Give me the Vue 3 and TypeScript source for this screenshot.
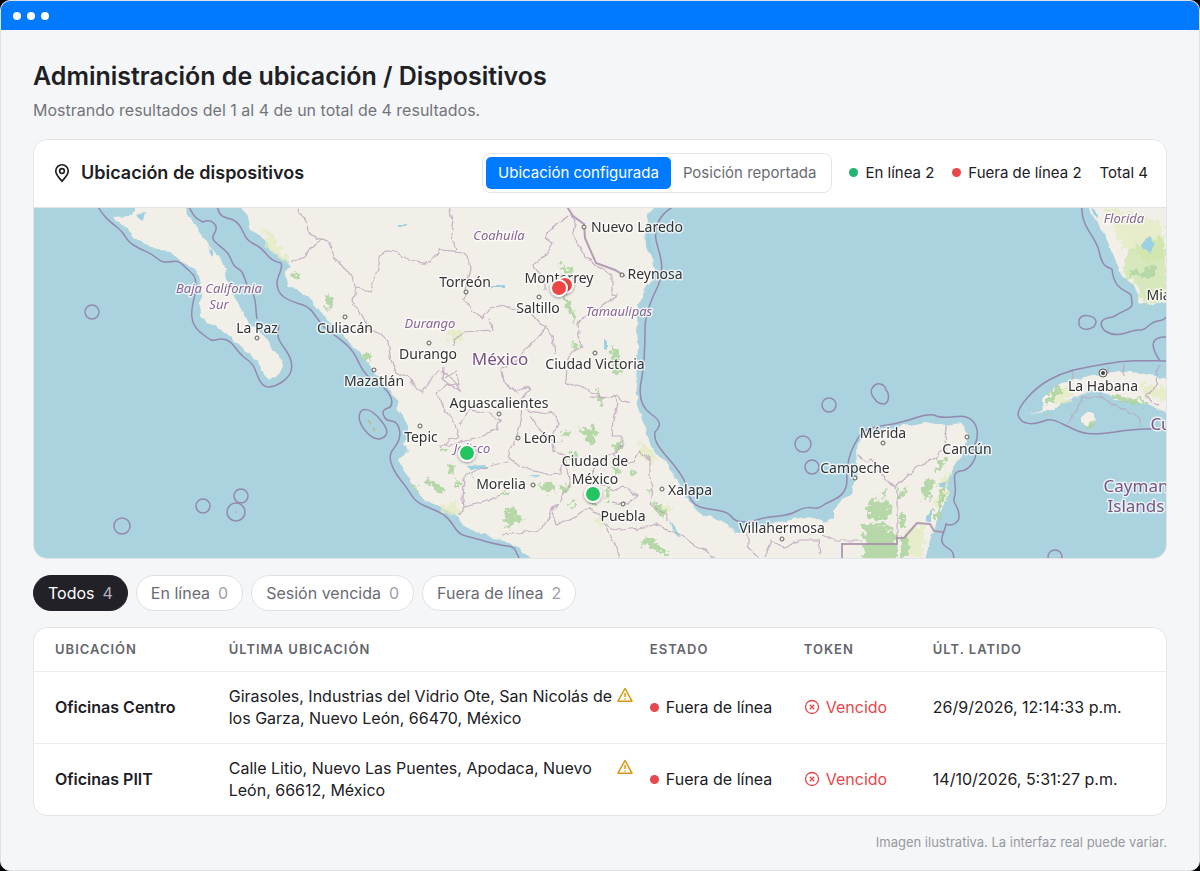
<script setup lang="ts">
import { ref } from 'vue'

type Mode = 'configured' | 'reported'
interface Place { text: string; x: number; y: number; kind: string; dot?: [number, number] }
interface Marker { x: number; y: number; color: string }
interface Device { name: string; address: string; state: string; token: string; beat: string }

const mode = ref<Mode>('configured')
const modes: { id: Mode; label: string }[] = [
  { id: 'configured', label: 'Ubicación configurada' },
  { id: 'reported', label: 'Posición reportada' },
]

const active = ref('Todos')
const filters = [
  { label: 'Todos', count: 4 },
  { label: 'En línea', count: 0 },
  { label: 'Sesión vencida', count: 0 },
  { label: 'Fuera de línea', count: 2 },
]

const columns = ['Ubicación', 'Última ubicación', 'Estado', 'Token', 'Últ. latido']
const devices: Device[] = [
  {
    name: 'Oficinas Centro',
    address: 'Girasoles, Industrias del Vidrio Ote, San Nicolás de los Garza, Nuevo León, 66470, México',
    state: 'Fuera de línea', token: 'Vencido', beat: '26/9/2026, 12:14:33 p.m.',
  },
  {
    name: 'Oficinas PIIT',
    address: 'Calle Litio, Nuevo Las Puentes, Apodaca, Nuevo León, 66612, México',
    state: 'Fuera de línea', token: 'Vencido', beat: '14/10/2026, 5:31:27 p.m.',
  },
]

const places: Place[] = [
  { text: 'Coahuila', x: 499, y: 240, kind: 'region' },
  { text: 'Durango', x: 430, y: 328, kind: 'region' },
  { text: 'Tamaulipas', x: 619, y: 316, kind: 'region' },
  { text: 'Jalisco', x: 472, y: 453, kind: 'region' },
  { text: 'Baja California', x: 219, y: 293, kind: 'region' },
  { text: 'Sur', x: 219, y: 309, kind: 'region' },
  { text: 'Florida', x: 1124, y: 223, kind: 'region' },
  { text: 'México', x: 500, y: 365, kind: 'country' },
  { text: 'Cuba', x: 1171, y: 430, kind: 'country' },
  { text: 'Cayman', x: 1136, y: 492, kind: 'country' },
  { text: 'Islands', x: 1136, y: 512, kind: 'country' },
  { text: 'Nuevo Laredo', x: 637, y: 232, kind: 'city', dot: [584, 227] },
  { text: 'Reynosa', x: 655, y: 279, kind: 'city', dot: [622, 275] },
  { text: 'Torreón', x: 465, y: 287, kind: 'city', dot: [466, 292] },
  { text: 'Monterrey', x: 559, y: 283, kind: 'city' },
  { text: 'Saltillo', x: 538, y: 313, kind: 'city', dot: [539, 297] },
  { text: 'La Paz', x: 257, y: 333, kind: 'city', dot: [257, 338] },
  { text: 'Culiacán', x: 345, y: 333, kind: 'city', dot: [345, 317] },
  { text: 'Durango', x: 428, y: 359, kind: 'city', dot: [429, 343] },
  { text: 'Mazatlán', x: 374, y: 386, kind: 'city', dot: [374, 370] },
  { text: 'Ciudad Victoria', x: 595, y: 369, kind: 'city', dot: [595, 353] },
  { text: 'Aguascalientes', x: 499, y: 408, kind: 'city', dot: [499, 414] },
  { text: 'Tepic', x: 421, y: 442, kind: 'city', dot: [420, 426] },
  { text: 'León', x: 540, y: 443, kind: 'city', dot: [518, 438] },
  { text: 'Morelia', x: 501, y: 489, kind: 'city', dot: [533, 485] },
  { text: 'Ciudad de', x: 595, y: 466, kind: 'city' },
  { text: 'México', x: 595, y: 484, kind: 'city' },
  { text: 'Puebla', x: 623, y: 521, kind: 'city', dot: [623, 504] },
  { text: 'Xalapa', x: 690, y: 495, kind: 'city', dot: [662, 489] },
  { text: 'Villahermosa', x: 782, y: 533, kind: 'city', dot: [782, 539] },
  { text: 'Mérida', x: 883, y: 438, kind: 'city', dot: [883, 443] },
  { text: 'Campeche', x: 855, y: 473, kind: 'city', dot: [855, 478] },
  { text: 'Cancún', x: 967, y: 454, kind: 'city', dot: [967, 437] },
  { text: 'La Habana', x: 1103, y: 391, kind: 'city' },
  { text: 'Miami', x: 1167, y: 300, kind: 'city' },
]

const markers: Marker[] = [
  { x: 565, y: 285, color: '#ef4444' },
  { x: 559, y: 288, color: '#ef4444' },
  { x: 467, y: 453, color: '#22c55e' },
  { x: 593, y: 494, color: '#22c55e' },
]
</script>

<template>
  <div class="window">
    <div class="titlebar"><i></i><i></i><i></i></div>
    <main class="page">
      <h1>Administración de ubicación / Dispositivos</h1>
      <p class="summary">Mostrando resultados del 1 al 4 de un total de 4 resultados.</p>

      <section class="card">
        <header class="card-head">
          <svg class="pin" viewBox="0 0 24 24" aria-hidden="true">
            <path d="M12 22C9.500 18.600 4.500 14.400 4.500 9.600a7.500 7.500 0 0 1 15 0C19.500 14.400 14.500 18.600 12 22Z" />
            <circle cx="12" cy="9.600" r="2.800" />
          </svg>
          <h2>Ubicación de dispositivos</h2>
          <div class="switch" role="group" aria-label="Tipo de ubicación">
            <button
              v-for="m in modes" :key="m.id" type="button"
              :class="{ on: mode === m.id }" :aria-pressed="mode === m.id" @click="mode = m.id"
            >{{ m.label }}</button>
          </div>
          <div class="legend">
            <span><i class="dot green-dot"></i>En línea 2</span>
            <span><i class="dot red-dot"></i>Fuera de línea 2</span>
            <span>Total 4</span>
          </div>
        </header>

        <svg class="map" viewBox="34 208 1132 350" preserveAspectRatio="xMidYMid slice" role="img" aria-label="Mapa de dispositivos">
          <defs>
            <filter id="rough" x="-5%" y="-5%" width="110%" height="110%">
              <feTurbulence type="fractalNoise" baseFrequency="0.11" numOctaves="2" seed="4" />
              <feDisplacementMap in="SourceGraphic" scale="6" xChannelSelector="R" yChannelSelector="G" />
              <feGaussianBlur stdDeviation="0.3" />
            </filter>
            <filter id="patchy" x="-5%" y="-5%" width="110%" height="110%">
              <feTurbulence type="fractalNoise" baseFrequency="0.2" numOctaves="2" seed="9" />
              <feDisplacementMap in="SourceGraphic" scale="14" xChannelSelector="R" yChannelSelector="G" />
              <feGaussianBlur stdDeviation="0.5" />
            </filter>
            <filter id="shade" x="-50%" y="-50%" width="200%" height="200%">
              <feDropShadow dx="0" dy="1" stdDeviation="1.500" flood-opacity="0.4" />
            </filter>
          </defs>
          <rect class="sea" x="34" y="208" width="1132" height="350" />

          <g class="land" filter="url(#rough)">
            <path d="M113 217L130 216L140 200L180 200L193 222L200 232L207 243L215 252L222 262L226 275L229 285L236 300L243 312L248 322L258 330L268 340L272 350L281 358L283 366L279 374L268 380L262 370L256 360L243 348L232 338L222 330L208 322L199 315L201 303L201 285L199 275L193 268L182 262L170 252L158 251L145 244L133 238L127 228Z" />
            <path d="M235 200L248 217L250 228L265 240L272 252L284 258L290 266L285 273L287 285L300 292L312 300L320 312L332 324L340 332L347 340L355 348L365 358L372 370L380 378L390 390L397 400L398 412L408 425L408 435L403 443L408 452L398 460L404 470L410 478L415 488L425 500L440 507L455 514L460 522L470 530L490 537L505 541L520 548L536 565L924 565L930 540L936 525L938 515L943 505L949 493L945 482L953 468L962 455L966 442L968 434L962 423L943 425L925 422L905 426L880 430L862 437L857 450L858 465L855 482L851 493L842 500L833 510L833 518L826 522L808 517L790 519L770 525L750 528L737 533L728 525L715 518L697 512L686 497L675 478L668 465L655 452L648 438L645 425L638 405L636 385L637 360L638 345L637 325L638 305L642 293L652 282L655 268L649 252L644 240L647 225L648 214L662 200Z" />
            <path d="M1085 200L1095 220L1105 235L1112 252L1117 265L1123 277L1134 285L1140 303L1150 305L1172 300L1172 200Z" />
            <path d="M1025 414L1043 410L1042 400L1050 390L1062 383L1080 379L1100 374L1120 371L1140 373L1172 380L1172 414L1155 408L1140 402L1115 400L1110 395L1090 390L1078 397L1063 402L1053 411L1045 411Z" />
            <path d="M1081 415L1088 412L1094 415L1095 424L1087 427L1081 422Z" />
          </g>

          <g class="pale" filter="url(#patchy)">
            <path d="M262 226L272 232L280 250L290 258L284 262L268 248Z M448 330L464 330L464 340L450 342Z M440 505L458 502L460 516L446 514Z M638 440L645 442L652 452L656 462L648 464L640 452Z M1140 385L1166 388L1166 400L1145 396Z M1050 392L1070 388L1075 396L1055 405Z" />
            <path d="M1112 214L1130 212L1164 225L1164 260L1148 262L1128 250L1118 238Z M1102 208L1120 208L1118 214L1106 214Z M596 518L602 514L602 526L596 524Z M662 505L672 505L674 513L662 515Z M942 478L950 470L946 500L940 508L934 505Z M908 528L925 524L922 556L906 556Z" />
          </g>
          <g class="green" filter="url(#patchy)">
            <path d="M291 274L302 271L302 276L292 278Z M326 292L332 298L331 306L326 303Z M326 308L331 310L330 313L326 311Z M364 353L371 353L372 361L364 359Z M560 264L570 268L574 274L562 272Z M563 294L570 303L577 318L576 325L568 310L561 298Z M574 342L578 346L576 350L573 348Z M612 346L618 351L624 370L614 374L611 364Z M596 384L599 388L602 404L598 402Z" />
            <path d="M441 448L449 448L448 454L442 453Z M448 464L454 466L454 474L449 473Z M424 480L434 482L446 488L444 492L434 490Z M456 480L460 482L459 488L455 486Z M412 485L420 486L416 489Z M506 510L514 507L517 515L526 519L514 523L510 530L504 521Z M537 486L550 482L556 490L547 494L542 490Z M560 488L568 485L570 492L564 493Z M500 493L508 490L508 495L502 497Z M471 477L475 476L474 480Z" />
            <path d="M577 427L588 431L594 423L597 438L592 446L586 438Z M561 433L568 431L570 435L563 438Z M614 446L622 439L620 450L612 449Z M570 453L577 453L575 462L569 461Z M567 502L576 499L576 504L566 507Z M605 490L610 489L609 500L606 500Z M590 501L596 501L596 506L590 506Z M614 468L620 467L618 474L613 472Z M653 502L660 505L666 513L660 518L653 510Z M645 537L652 536L660 546L669 552L666 557L652 548L641 544Z M646 488L650 490L649 494Z M630 470L636 472L634 478Z" />
            <path d="M882 492L888 490L886 496L880 498Z M871 500L889 501L891 512L886 520L870 520L866 509Z M862 524L884 523L896 535L897 562L862 562L866 540Z M900 488L907 489L906 496L899 498Z M900 513L905 512L905 524L900 528Z M901 536L907 536L907 558L901 558Z M926 480L933 478L929 500L923 500L922 490Z M942 458L947 456L943 468L936 474L935 468Z M934 512L939 502L941 484L946 490L939 520L934 522Z" />
            <path d="M1046 396L1058 387L1064 389L1052 402L1046 402Z M1112 396L1128 396L1145 402L1142 406L1118 401Z M1040 414L1050 411L1045 415Z M1084 425L1095 422L1094 428Z" />
            <path class="soft" d="M1126 250L1140 246L1164 235L1166 270L1166 298L1150 303L1140 298L1136 284L1124 274Z" />
            <path d="M1128 270L1138 272L1148 268L1156 266L1158 274L1148 278L1138 276L1130 276Z" />
          </g>
          <g class="lakes" filter="url(#rough)">
            <path d="M466 465L485 464L487 468L470 469Z M490 286h14v2h-14Z M398 225h8v2h-8Z M604 340L607 340L607 350L604 349Z M1142 245L1150 236L1155 243L1151 253L1143 249Z M670 520L676 528L681 538L674 532Z M530 476L540 476L538 478Z M926 515L932 510L932 524L926 522Z M941 482L947 482L946 488L940 488Z M136 215L145 213L143 220Z M209 247L214 252L214 258L210 254Z M646 228L650 238L656 262L652 254L646 240Z M1092 208L1099 214L1096 218Z" />
          </g>

          <g class="states" filter="url(#rough)">
            <path d="M291 262L304 256L316 243L322 240L330 243L333 258L347 270L349 273L356 288L371 291L375 277L379 260L385 249L397 253L410 260L430 263L440 250L463 252L468 257L470 269L463 299L472 312L482 318L490 308L500 306L515 309L530 312L540 324L547 327L553 336L555 354" />
            <path d="M322 240L308 233L306 219L300 215L296 205 M450 205L453 220L451 236L456 249 M356 288L352 301L362 315L368 328L381 334L388 341L390 356L396 372L408 378L414 384L422 394L430 380L440 370L452 378L460 390L446 384L438 392L441 406L449 414L456 426L460 438L448 440L441 449" />
            <path d="M490 318L492 330L463 332L453 340L454 346 M444 366L443 380L452 386L458 384L456 372L443 380 M545 327L540 335L527 347L520 356L510 364L501 370L503 382L514 392L525 386L530 390L520 400L528 410L555 414L558 424L552 436 M501 370L505 384L518 394" />
            <path d="M567 216L560 222L551 228L545 238L552 243L546 254L533 265L540 275L545 284L545 290 M569 215L576 220L573 233L579 245L585 256L597 266L612 276L612 294L617 295L600 308L585 316L578 324L580 342L583 348L571 352L567 364L566 383L580 387L600 396L618 397L630 404" />
            <path d="M523 411L519 430L513 445L508 457L519 466L530 470L550 475L560 474L566 456L554 450L553 443L562 440 M508 462L480 468L464 477L463 500L464 507L478 504L490 500L500 495 M464 507L458 516 M440 446L460 442L480 438L496 430L500 420L488 413L470 410L460 425" />
            <path d="M553 440L540 430L530 415 M566 456L570 480L560 502L550 512L548 520L540 530L503 535 M552 512L556 525L570 520L590 508L601 516L604 525L620 530L640 528L655 525L665 528L680 534L694 545L705 550L715 558" />
            <path d="M590 397L614 397L618 403L614 420L612 436L622 436L623 444L615 453L600 458L592 475L600 484L615 490L625 486L638 495L628 505L612 502 M614 453L620 464L634 462L640 450L650 462L650 475L652 490L650 503L658 510L668 515L668 522 M604 525L614 541L620 558 M748 532L748 546L758 558 M765 558L772 540L784 548L800 540L818 540L820 555 M822 535L836 541L862 541" />
            <path d="M858 455L867 462L872 459L882 474L895 488L900 482L918 467L938 456L945 448L946 425 M895 488L897 497L897 540 M1072 370L1074 380 M1108 365L1108 374 M1124 364L1124 376 M1083 397L1068 424 M1083 397L1100 397L1141 418L1141 428 M1160 364L1155 377L1158 384L1146 397L1158 406 M1100 397L1102 386" />
          </g>
          <g class="national">
            <path d="M566 205L573 216L584 224L585 238L596 263L615 270L625 276" />
            <path d="M842 562V544H897V538H904L917 523L930 524L934 531L943 532" />
          </g>

          <g class="limits">
            <path d="M97 205C103 216 108 220 118 228S123 239 135 246S149 251 158 259S174 256 183 265S196 274 196 286S184 319 200 332S211 339 222 339S236 352 245 358S254 367 258 377S268 391 282 382S293 360 285 349S277 337 279 325" />
            <path d="M188 205C193 214 194 218 203 222C212 218 220 226 214 234S226 247 230 257S235 267 240 270S245 286 251 292S255 308 257 319" />
            <path d="M217 205C219 216 222 217 231 219C246 225 240 238 254 244S265 260 281 263C284 269 277 275 277 283C277 298 291 301 303 305S316 322 330 332S352 347 359 363S375 380 384 388S394 406 388 408S382 413 385 418S396 418 399 428S397 444 392 451S393 471 403 483S411 500 425 506S446 514 453 525S462 535 477 539S498 545 508 546S514 553 522 562" />
            <path d="M676 205C659 214 654 226 656 240C659 254 666 265 658 286C652 298 645 313 645 328S645 359 642 377C637 398 642 408 651 414C663 422 660 427 655 432C653 441 661 450 668 458S683 475 686 485S690 503 700 507C714 511 724 509 731 516C735 522 740 522 752 522C769 513 781 520 797 511S813 514 825 504C841 497 847 493 847 479C846 457 855 443 860 435C870 424 887 427 905 421C916 419 923 413 934 415C945 421 957 414 966 417C979 421 980 437 973 448C981 456 969 471 960 471C950 473 957 483 955 495C951 505 959 504 959 515C960 522 952 527 946 524C944 535 938 540 945 546C952 551 954 551 954 562" />
            <path d="M1082 205C1080 227 1096 236 1099 251S1106 267 1112 269C1114 291 1126 289 1131 295C1134 312 1132 305 1113 317C1094 319 1103 329 1105 331C1120 340 1130 329 1139 330S1148 322 1158 321S1165 315 1172 312" />
            <path d="M1018 415C1018 406 1033 389 1049 380S1076 369 1105 364S1149 361 1172 361M1172 427C1150 430 1134 428 1115 432C1084 437 1078 431 1067 426S1052 418 1044 421S1022 427 1018 415" />
            <path d="M1172 337C1146 335 1152 349 1160 361M360 413C356 424 371 440 380 439C391 435 388 428 377 416C369 408 362 408 360 413" />
            <circle cx="92" cy="312" r="7" /><circle cx="203" cy="506" r="7" /><circle cx="241" cy="496" r="7" /><circle cx="236" cy="512" r="9" />
            <circle cx="122" cy="526" r="8" /><circle cx="829" cy="405" r="7" /><circle cx="803" cy="444" r="8" /><circle cx="812" cy="467" r="7" />
            <path d="M873 387C876 382 885 383 886 390C890 394 889 403 884 404C878 404 876 401 874 398C871 395 870 390 873 387M1079 320C1081 314 1093 314 1096 321C1096 330 1082 332 1079 325Z" />
            <circle cx="1055" cy="557" r="7" />
            <path class="islet" d="M368 420l3 4M373 428l2 3M236 511v2" />
          </g>

          <g v-for="p in places" :key="p.text + p.kind">
            <circle v-if="p.dot" class="town" :cx="p.dot[0]" :cy="p.dot[1]" r="2" />
            <text :class="p.kind" :x="p.x" :y="p.y">{{ p.text }}</text>
          </g>
          <circle class="town" cx="1103" cy="373" r="4" />
          <circle class="core" cx="1103" cy="373" r="2" />

          <circle v-for="m in markers" :key="m.x" class="marker" :cx="m.x" :cy="m.y" r="8" :fill="m.color" filter="url(#shade)" />
        </svg>
      </section>

      <div class="filters">
        <button
          v-for="f in filters" :key="f.label" type="button"
          :class="{ on: active === f.label }" @click="active = f.label"
        >{{ f.label }}<span>{{ f.count }}</span></button>
      </div>

      <div class="table-box">
        <table>
          <colgroup><col class="c1" /><col class="c2" /><col class="c3" /><col class="c4" /><col /></colgroup>
          <thead>
            <tr><th v-for="c in columns" :key="c" scope="col">{{ c }}</th></tr>
          </thead>
          <tbody>
            <tr v-for="d in devices" :key="d.name">
              <td class="name">{{ d.name }}</td>
              <td>
                <div class="address">
                  <span>{{ d.address }}</span>
                  <svg class="warn" viewBox="0 0 16 16" aria-hidden="true">
                    <path d="M8 1.500L15 14.200H1Z" /><path d="M8 6v4M8 11.200v1.400" />
                  </svg>
                </div>
              </td>
              <td><span class="status"><i class="dot red-dot"></i>{{ d.state }}</span></td>
              <td>
                <span class="token">
                  <svg viewBox="0 0 16 16" aria-hidden="true"><circle cx="8" cy="8" r="6.500" /><path d="M5.800 5.800l4.400 4.400M10.200 5.800l-4.400 4.400" /></svg>
                  {{ d.token }}
                </span>
              </td>
              <td>{{ d.beat }}</td>
            </tr>
          </tbody>
        </table>
      </div>
      <p class="note">Imagen ilustrativa. La interfaz real puede variar.</p>
    </main>
  </div>
</template>

<style>
html { background: #000; }
</style>

<style scoped>
* { box-sizing: border-box; }
.window {
  min-height: 100vh;
  border: 1px solid #dfe1e5;
  border-radius: 10px;
  overflow: hidden;
  background: #f5f6f8;
  color: #202024;
  font: 16px/22px Inter, "Liberation Sans", sans-serif;
}
.titlebar {
  display: flex;
  align-items: center;
  gap: 6px;
  height: 29px;
  padding-left: 12px;
  background: #007bff;
}
.titlebar i { width: 8px; height: 8px; border-radius: 50%; background: #fff; }
.page { padding: 29px 32px 0; }
h1 { margin: 0; font-size: 25px; line-height: 34px; font-weight: 600; }
.summary { margin: 6px 0 18px; color: #73747b; }
.card, .table-box {
  border: 1px solid #e2e4e7;
  border-radius: 14px;
  background: #fff;
  overflow: hidden;
}
.card-head {
  display: flex;
  align-items: center;
  height: 68px;
  padding: 0 18px 2px;
  border-bottom: 1px solid #e2e4e7;
}
.pin { width: 20px; height: 20px; margin-right: 9px; fill: none; stroke: #202024; stroke-width: 2; }
h2 { margin: 0 auto 0 0; font-size: 18px; line-height: 24px; font-weight: 600; }
.switch {
  display: flex;
  padding: 3px;
  border: 1px solid #e2e4e7;
  border-radius: 8px;
}
button { font: inherit; cursor: pointer; }
.switch button {
  height: 32px;
  padding: 0 12px;
  border: 0;
  border-radius: 5px;
  background: transparent;
  color: #6b6c73;
  font-size: 15px;
}
.switch button.on { background: #007bff; color: #fff; }
.legend { display: flex; gap: 18px; margin-left: 17px; font-size: 15px; white-space: nowrap; }
.legend span, .status { display: flex; align-items: center; }
.dot { flex: none; width: 9px; height: 9px; border-radius: 50%; margin-right: 7px; }
.green-dot { background: #20b572; }
.red-dot { background: #e5484d; }
.map { display: block; width: 100%; height: auto; }
.sea { fill: #aad3df; }
.land { fill: #f2efe9; }
.pale { fill: #e3ebbd; opacity: 0.7; }
.green { fill: #acd29c; opacity: 0.85; }
.green .soft { fill: #c3e29c; opacity: 0.7; }
.lakes { fill: #9fd0e2; }
.states { fill: none; stroke: #b9a2b8; stroke-width: 1.2; opacity: 0.8; }
.national { fill: none; stroke: #a488a8; stroke-width: 2; opacity: 0.8; }
.limits { fill: none; stroke: #9389ae; stroke-width: 1.5; }
.islet { stroke: #b8b890; }
.town { fill: #f4f2ed; stroke: #5a5a5a; stroke-width: 1; }
.core { fill: #444; }
text {
  font-family: "Noto Sans", sans-serif;
  text-anchor: middle;
  paint-order: stroke;
  stroke: rgba(255, 255, 255, 0.7);
  stroke-width: 3px;
  stroke-linejoin: round;
}
.city { font-size: 14px; fill: #333; }
.region { font-size: 13px; font-style: italic; fill: #8a6592; }
.country { font-size: 17px; fill: #7a5584; }
.marker { stroke: #fff; stroke-width: 2; }
.filters { display: flex; gap: 8px; margin: 16px 0; }
.filters button {
  display: flex;
  gap: 8px;
  align-items: center;
  height: 36px;
  padding: 0 14px;
  border: 1px solid #dfe1e5;
  border-radius: 18px;
  background: #fff;
  color: #6b6c73;
}
.filters span { color: #9d9ea6; }
.filters button.on { background: #222127; border-color: #222127; color: #fff; }
.filters .on span { color: #b3b1bf; }
table { width: 100%; border-collapse: collapse; table-layout: fixed; }
.c1 { width: 15.7%; }
.c2 { width: 37.2%; }
.c3 { width: 13.6%; }
.c4 { width: 11.4%; }
th {
  height: 43px;
  padding: 0 0 0 17px;
  text-align: left;
  text-transform: uppercase;
  font-size: 13px;
  font-weight: 600;
  letter-spacing: 1px;
  color: #65666c;
}
td { height: 72px; padding: 0 0 0 17px; border-top: 1px solid #ebecef; white-space: nowrap; }
th:first-child, td:first-child { padding-left: 21px; }
.name { font-weight: 600; }
.address { display: flex; justify-content: space-between; white-space: normal; }
.warn { flex: none; width: 16px; height: 16px; margin-top: 2px; fill: none; stroke: #db9710; stroke-width: 1.5; stroke-linejoin: round; }
.token { display: flex; align-items: center; gap: 6px; color: #e5484d; }
.token svg { width: 16px; height: 16px; fill: none; stroke: currentColor; stroke-width: 1.3; }
.note { margin: 16px 0; text-align: right; font-size: 13px; line-height: 20px; color: #98999f; }
</style>
